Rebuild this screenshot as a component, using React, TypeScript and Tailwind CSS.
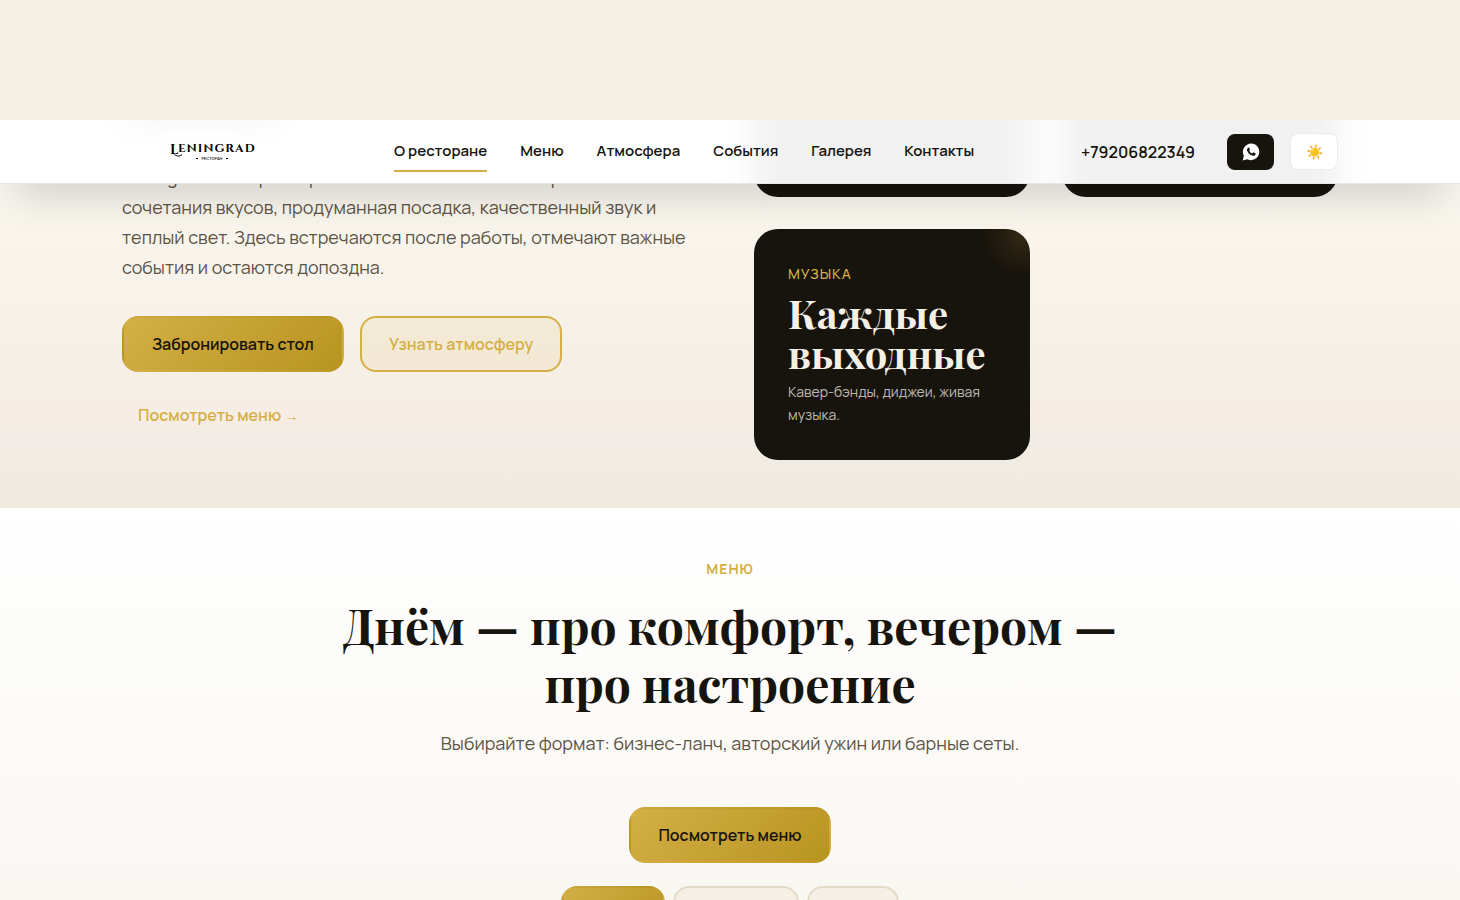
const navItems = ["О ресторане", "Меню", "Атмосфера", "События", "Галерея", "Контакты"];

const goldFill = "border-2 border-transparent bg-linear-135 from-[#d4af45] to-[#b8941f] text-[#17130d]";

function Logo() {
  return (
    <a href="#top" aria-label="Leningrad ресторан" className="flex w-[180px] justify-center text-black">
      <svg viewBox="0 0 84 22" className="w-[84px] overflow-visible" aria-hidden="true">
        <text x="0" y="13" fontFamily="Cinzel, 'Playfair Display', 'Liberation Serif', serif" fontWeight="600" fontSize="14">L</text>
        <path d="M4 12.500c1 2.600 5 3.400 8 1.200" fill="none" stroke="currentColor" strokeWidth="1" />
        <text x="8" y="11" fontFamily="Cinzel, 'Playfair Display', 'Liberation Serif', serif" fontWeight="700" fontSize="12" letterSpacing="1">ENINGRAD</text>
        <text x="42" y="19" textAnchor="middle" fontFamily="Manrope, Inter, sans-serif" fontWeight="600" fontSize="4">РЕСТОРАН</text>
        <path d="M26 17.500h2M56 17.500h2" stroke="currentColor" strokeWidth="1" />
      </svg>
    </a>
  );
}

function WhatsAppIcon() {
  return (
    <svg viewBox="0 0 24 24" className="size-[18px]" aria-hidden="true">
      <path d="M12.200 0.800a11 11 0 0 0-9.700 16.300L0.900 23.200l6.200-1.600A11 11 0 1 0 12.200 0.800Z" fill="#fff" />
      <path
        d="M8.200 6.200c.5-.5 1.100-.4 1.400.2l.9 2c.2.400.1.700-.1 1l-.8 1c.9 1.700 2.200 2.900 4 3.700l1.100-1.300c.3-.3.600-.4 1-.2l2 1c.5.200.6.500.5 1-.3 1.600-1.600 2.500-3.200 2.500-3.900-.3-8-4.200-8.300-8-.1-1.200.6-2.200 1.500-2.900Z"
        fill="#17130d"
      />
    </svg>
  );
}

function HeaderHaze() {
  return (
    <div className="absolute inset-0 overflow-hidden bg-white" aria-hidden="true">
      <div className="mx-auto grid max-w-[1280px] grid-cols-[576px_minmax(0,1fr)] gap-14 px-8">
        <div>
          <div className="-mt-9 h-10 w-40 rounded-full bg-[#f6f6f6] blur-md" />
        </div>
        <div className="-mt-16 grid h-48 grid-cols-2 gap-8 blur-[16px]">
          <div className="bg-[#f1f1f1]" />
          <div className="bg-[#f1f1f1]" />
        </div>
      </div>
    </div>
  );
}

function Header() {
  return (
    <header className="sticky top-0 z-10 border-b border-[#e6e6e5] shadow-[0_24px_40px_-16px_rgba(0,0,0,0.2)]">
      <HeaderHaze />
      <div className="relative mx-auto flex h-[63px] max-w-[1280px] items-center px-8">
        <Logo />
        <nav className="ml-[92px] flex gap-[33px] text-[15px] font-semibold">
          {navItems.map((item, i) => (
            <a
              key={item}
              href={`#s${i}`}
              className={`border-b-2 py-[7px] leading-6 ${i === 0 ? "border-[#d4af45]" : "border-transparent"}`}
            >
              {item}
            </a>
          ))}
        </nav>
        <div className="ml-auto flex items-center">
          <a href="tel:+79206822349" className="mr-8 text-base font-semibold">+79206822349</a>
          <a
            href="#whatsapp"
            aria-label="WhatsApp"
            className="mr-4 flex h-9 w-[47px] items-center justify-center rounded-lg bg-[#17130d]"
          >
            <WhatsAppIcon />
          </a>
          <button
            type="button"
            aria-label="Сменить тему"
            className="flex h-[37px] w-12 items-center justify-center rounded-lg border border-black/8 bg-white text-sm"
          >
            ☀️
          </button>
        </div>
      </div>
    </header>
  );
}

function EventCard() {
  return (
    <article className="relative overflow-hidden rounded-3xl bg-[#17130d] p-[34px] text-[#f5f0e6]">
      <div className="absolute -top-8 -right-8 size-20 rounded-full bg-[radial-gradient(circle,rgba(212,175,55,0.14),transparent_70%)]" />
      <p className="text-sm leading-[22px] font-medium tracking-[1px] text-[#d4af45] uppercase">Музыка</p>
      <h3 className="mt-2 font-['Playfair_Display','Liberation_Serif',serif] text-[40px] leading-10 font-bold">
        Каждые выходные
      </h3>
      <p className="mt-[7px] text-sm leading-[23px] text-[#f5f0e6]/75">Кавер-бэнды, диджеи, живая музыка.</p>
    </article>
  );
}

function About() {
  return (
    <section className="-mt-16 h-[388px] overflow-hidden bg-[linear-gradient(180deg,#faf7f0_0%,#f8f4ec_35%,#f5efe6_65%,#f6ede3_77%,#f1ece5_82%,#efebdf_100%)]">
      <div className="mx-auto grid max-w-[1280px] grid-cols-[576px_minmax(0,1fr)] gap-14 px-8">
        <div className="pt-[42px]">
          <p className="text-lg leading-[30px] text-[#5c5445]">
            Leningrad — это ресторан в классическом стиле: яркие
            <br />
            сочетания вкусов, продуманная посадка, качественный звук и теплый свет. Здесь встречаются после работы, отмечают важные события и остаются допоздна.
          </p>
          <div className="mt-[34px] flex gap-4">
            <button type="button" className={`h-14 rounded-2xl px-7 font-semibold ${goldFill}`}>
              Забронировать стол
            </button>
            <button
              type="button"
              className="h-14 rounded-2xl border-2 border-[#d4af45] bg-[#d4af37]/10 px-[27px] font-semibold text-[#d4af45]"
            >
              Узнать атмосферу
            </button>
          </div>
          <a href="#menu" className="mt-[31px] ml-4 inline-block leading-6 font-semibold text-[#d4af45]">
            Посмотреть меню <span className="font-['Liberation_Sans'] text-sm font-normal">→</span>
          </a>
        </div>
        <div className="grid grid-cols-2 gap-8">
          <div className="h-[77px] rounded-b-3xl bg-[#17130d]" />
          <div className="h-[77px] rounded-b-3xl bg-[#17130d]" />
          <EventCard />
        </div>
      </div>
    </section>
  );
}

function Menu() {
  return (
    <section id="menu" className="flex h-[392px] flex-col items-center overflow-hidden bg-linear-to-b from-white to-[#f9f7f2] pt-[50px] text-center">
      <p className="text-sm leading-[22px] font-bold tracking-[1px] text-[#d4af45] uppercase">Меню</p>
      <h2 className="mt-4 max-w-[800px] font-['Playfair_Display','Liberation_Serif',serif] text-5xl leading-[58px] font-bold">
        Днём — про комфорт, вечером — про настроение
      </h2>
      <p className="mt-4 text-lg leading-[30px] text-[#5c5445]">
        Выбирайте формат: бизнес-ланч, авторский ужин или барные сеты.
      </p>
      <button type="button" className={`mt-[49px] h-14 shrink-0 rounded-2xl px-[27px] font-semibold ${goldFill}`}>
        Посмотреть меню
      </button>
      <div className="mt-[23px] flex gap-2">
        <button type="button" aria-label="Обеды" className={`h-[52px] w-[104px] rounded-2xl ${goldFill}`} />
        <button type="button" aria-label="Вечернее" className="h-[52px] w-[126px] rounded-2xl border-2 border-[#e3dac8] bg-[#f5f0e6]" />
        <button type="button" aria-label="Бар" className="h-[52px] w-[92px] rounded-2xl border-2 border-[#e3dac8] bg-[#f5f0e6]" />
      </div>
    </section>
  );
}

export default function App() {
  return (
    <div id="top" className="bg-[#f5f0e4] pt-[120px] font-['Manrope','Inter',sans-serif] text-[#17130d]">
      <Header />
      <About />
      <Menu />
    </div>
  );
}
